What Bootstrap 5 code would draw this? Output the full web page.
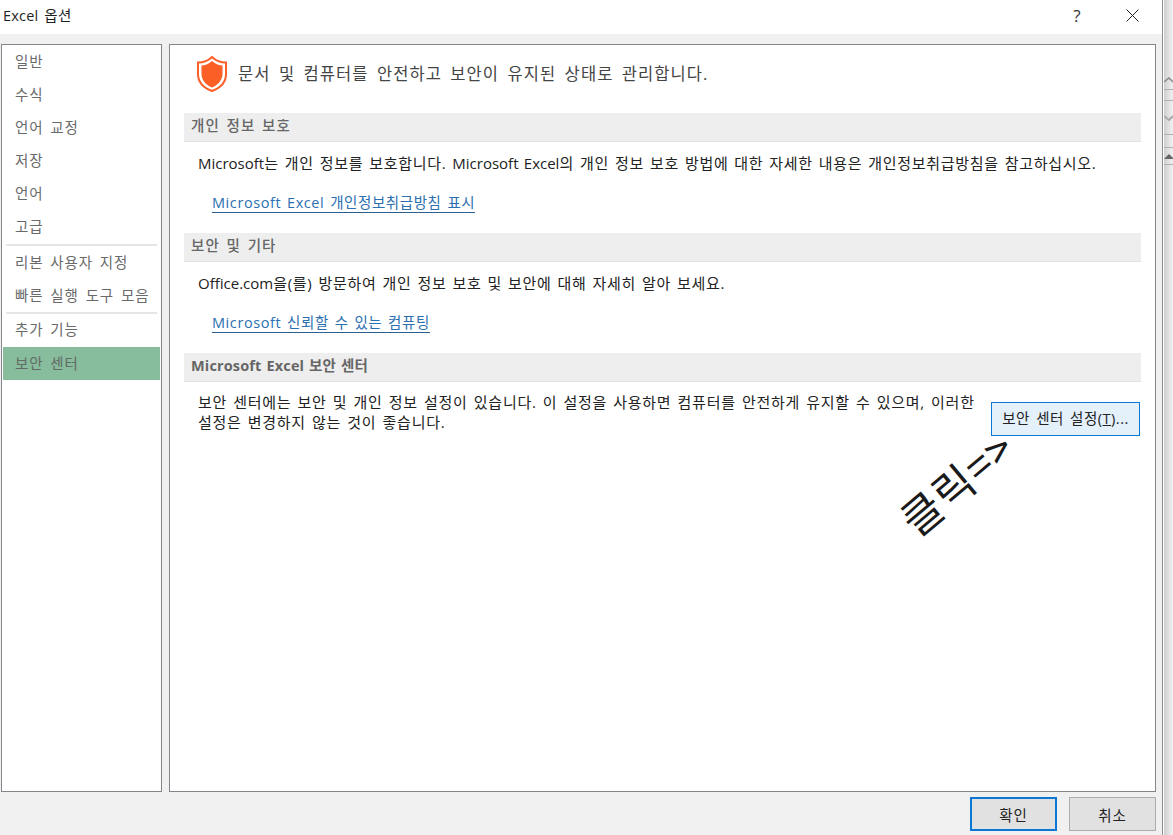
<!DOCTYPE html>
<html lang="ko">
<head>
<meta charset="utf-8">
<title>Excel 옵션</title>
<link href="https://cdn.jsdelivr.net/npm/bootstrap@5.3.0/dist/css/bootstrap.min.css" rel="stylesheet">
<style>
html,body{margin:0;height:835px;overflow:hidden;background:#fff}
body{font-family:"Noto Sans CJK KR","Noto Sans",sans-serif;font-size:14.5px;line-height:20px;color:#1f1f1f;position:relative}
.xl-text{font-family:"Open Sans","Noto Sans CJK KR",sans-serif}
.xl-lat{letter-spacing:0}
.xl-dialog{width:1163px;height:835px;background:#f0f0f0;border-right:1px solid #8e8e8e}
.xl-title{height:34px;background:#fff;padding:0 0 0 3px;font-size:14.5px;line-height:31px;word-spacing:2px;letter-spacing:.2px}
.xl-q{width:16px;text-align:center;margin-right:41px;font-size:17px;color:#333}
.xl-x{margin-right:23px;margin-top:9px}
.xl-body{height:758px;margin-top:10px;gap:7px;padding-left:1px;padding-right:6px}
.xl-side{width:161px;background:#fff;border:1px solid #84858a;padding:1px 1px 0;flex:none;color:#6a6a6a;letter-spacing:.8px;word-spacing:2.5px}
.xl-item{height:33px;line-height:32px;padding-left:12px;white-space:nowrap}
.xl-item-tight{height:33px;line-height:33px}
.xl-item-add{line-height:31px}
.xl-item-on{background:#87bd9c;color:#626b66;line-height:33px}
.xl-rule{height:2px;background:#e6e6e6;margin:0 3px 0 3px}
.xl-main{flex:1;background:#fff;border:1px solid #84858a;padding:0 14px 0 14px;min-width:0}
.xl-head{height:68px;padding:0 0 10px 12px;gap:10px;font-size:16.500px;color:#444;letter-spacing:1.08px;word-spacing:3px}
.xl-sect{height:29px;background:#eeeeee;border-bottom:1px solid #e2e2e2;padding-left:7px;line-height:26px;color:#666;font-weight:500;letter-spacing:1.1px;word-spacing:1.8px}
.xl-sect-bold{font-weight:700;letter-spacing:.15px;word-spacing:1px}
.xl-para{padding:12px 0 0 14px;height:31px;line-height:19px;font-size:15px;color:#222;white-space:nowrap;letter-spacing:.7px;word-spacing:1.4px}
.xl-linkrow{padding:19px 0 0 28px;height:60px;line-height:21px}
.xl-link{color:#2b6fb0;text-decoration:none;border-bottom:1px solid #2b5f92;display:inline-block;line-height:18px;letter-spacing:.58px;word-spacing:1.5px;white-space:nowrap}
.xl-sec{padding:8px 0 0 14px;justify-content:space-between}
.xl-sec-t{line-height:20px;font-size:15px;flex:none;padding-top:2px;color:#222;letter-spacing:.72px;word-spacing:1.6px;white-space:nowrap}
.xl-btn-b{width:149px;height:34px;margin-top:12px;margin-right:1px;background:#e4f0fa;border:1px solid #0a78d4;border-radius:0;padding:0;font-size:14.5px;line-height:32px;color:#222;white-space:nowrap;flex:none;letter-spacing:.5px;word-spacing:2px}
.xl-foot{height:43px;padding:5px 6px 0 0;gap:12px}
.xl-btn-f{width:87px;height:34px;background:#e1e1e1;border:1px solid #adadad;border-radius:0;padding:0;font-size:14.5px;color:#222;letter-spacing:.8px}
.xl-btn-p{border:2px solid #0a78d4}
.xl-strip{position:absolute;left:1164px;top:0;width:9px;height:835px;background:linear-gradient(90deg,#cfcfcf,#f1f1f1)}
.xl-strip-l{position:absolute;left:0;width:9px;height:1px;background:#b0b0b0}
.xl-note{position:absolute;left:905px;top:499px;font-size:43px;line-height:50px;font-weight:400;color:#1a1a1a;transform:rotate(-40deg);transform-origin:0 50%;white-space:nowrap;letter-spacing:1.5px}
</style>
</head>
<body>
<div class="xl-dialog d-flex flex-column">
  <div class="xl-title d-flex align-items-start xl-text">
    <span class="flex-grow-1">Excel 옵션</span>
    <span class="xl-q">?</span>
    <svg class="xl-x" width="13" height="13" viewBox="0 0 13 13"><path d="M.5.5l12 12M12.5.5l-12 12" stroke="#222" fill="none"/></svg>
  </div>
  <div class="xl-body d-flex">
    <div class="xl-side xl-text">
      <div class="xl-item">일반</div>
      <div class="xl-item">수식</div>
      <div class="xl-item">언어 교정</div>
      <div class="xl-item">저장</div>
      <div class="xl-item">언어</div>
      <div class="xl-item">고급</div>
      <div class="xl-rule"></div>
      <div class="xl-item xl-item-tight">리본 사용자 지정</div>
      <div class="xl-item xl-item-tight">빠른 실행 도구 모음</div>
      <div class="xl-rule"></div>
      <div class="xl-item xl-item-tight xl-item-add">추가 기능</div>
      <div class="xl-item xl-item-tight xl-item-on">보안 센터</div>
    </div>
    <div class="xl-main xl-text">
      <div class="xl-head d-flex align-items-center">
        <svg width="32" height="36" viewBox="0 0 32 36"><path d="M16 1C12 5 7 6.500 2 6.500V18c0 8 6 14 14 17 8-3 14-9 14-17V6.500C25 6.500 20 5 16 1z" fill="#fff" stroke="#fc5f26" stroke-width="2"/><path d="M16 5C12.500 8 8.500 9.500 5.500 9.500V18c0 6 4.500 11 10.500 13.500C22 29 26.500 24 26.500 18V9.500C23.500 9.500 19.500 8 16 5z" fill="#fc5f26"/></svg>
        <span>문서 및 컴퓨터를 안전하고 보안이 유지된 상태로 관리합니다.</span>
      </div>
      <div class="xl-sect">개인 정보 보호</div>
      <div class="xl-para"><span class="xl-lat">Microsoft</span>는 개인 정보를 보호합니다. <span class="xl-lat">Microsoft Excel</span>의 개인 정보 보호 방법에 대한 자세한 내용은 개인정보취급방침을 참고하십시오.</div>
      <div class="xl-linkrow"><a class="xl-link" href="#">Microsoft Excel 개인정보취급방침 표시</a></div>
      <div class="xl-sect">보안 및 기타</div>
      <div class="xl-para"><span class="xl-lat">Office.com</span>을(를) 방문하여 개인 정보 보호 및 보안에 대해 자세히 알아 보세요.</div>
      <div class="xl-linkrow"><a class="xl-link" href="#">Microsoft 신뢰할 수 있는 컴퓨팅</a></div>
      <div class="xl-sect xl-sect-bold">Microsoft Excel 보안 센터</div>
      <div class="xl-sec d-flex">
        <div class="xl-sec-t">보안 센터에는 보안 및 개인 정보 설정이 있습니다. 이 설정을 사용하면 컴퓨터를 안전하게 유지할 수 있으며, 이러한<br>설정은 변경하지 않는 것이 좋습니다.</div>
        <button class="btn xl-btn-b" type="button">보안 센터 설정(<u>T</u>)...</button>
      </div>
    </div>
  </div>
  <div class="xl-foot d-flex justify-content-end">
    <button class="btn xl-btn-f xl-btn-p" type="button">확인</button>
    <button class="btn xl-btn-f" type="button">취소</button>
  </div>
</div>
<div class="xl-strip">
  <svg class="position-absolute" style="top:76px;left:0" width="9" height="8" viewBox="0 0 9 8"><path d="M0 6l5-4 4 4" stroke="#888" stroke-width="1.500" fill="none"/></svg>
  <div class="xl-strip-l" style="top:89px"></div>
  <div class="xl-strip-l" style="top:100px"></div>
  <svg class="position-absolute" style="top:114px;left:0" width="9" height="8" viewBox="0 0 9 8"><path d="M0 2l5 4 4-4" stroke="#aaa" stroke-width="2" fill="none"/></svg>
  <div class="xl-strip-l" style="top:134px"></div>
  <div class="xl-strip-l" style="top:147px"></div>
  <svg class="position-absolute" style="top:153px;left:0" width="9" height="7" viewBox="0 0 9 7"><path d="M0 6l5-5 4 4v1z" fill="#666"/></svg>
  <div class="xl-strip-l" style="top:164px"></div>
</div>
<div class="xl-note">클릭=&gt;</div>
<script src="https://cdn.jsdelivr.net/npm/bootstrap@5.3.0/dist/js/bootstrap.bundle.min.js"></script>
</body>
</html>
